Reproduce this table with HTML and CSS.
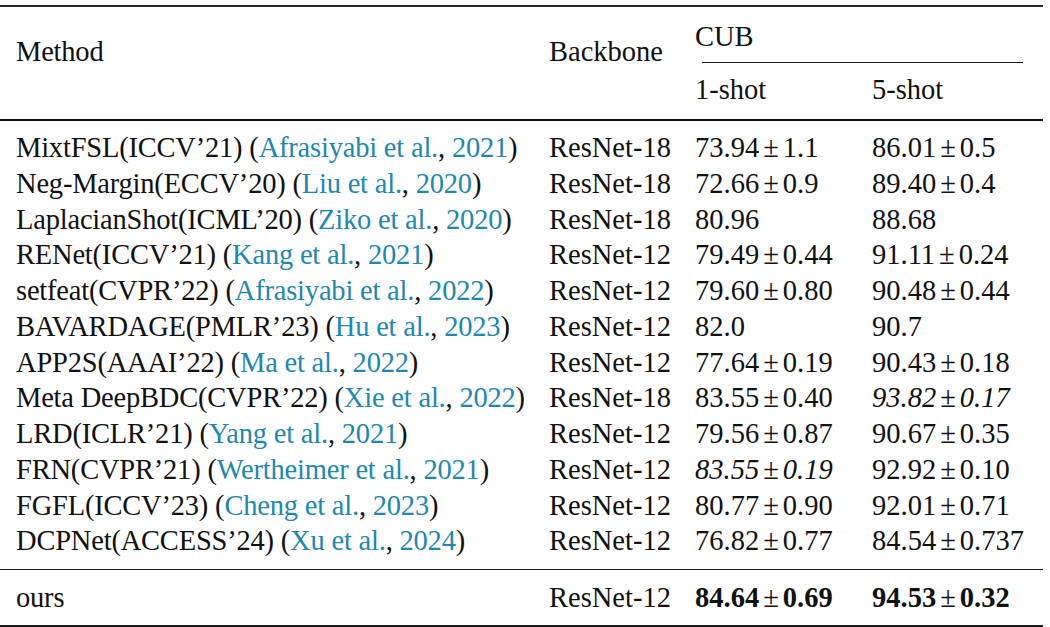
FILE: index.html
```html
<!DOCTYPE html>
<html lang="en">
<head>
<meta charset="utf-8">
<title>CUB results</title>
<link rel="stylesheet" href="styles.css">
</head>
<body>
<table class="results">
  <colgroup>
    <col class="c-method"><col class="c-backbone"><col class="c-one"><col class="c-five">
  </colgroup>
  <thead>
    <tr class="h1">
      <th rowspan="2" class="span2 first">Method</th>
      <th rowspan="2" class="span2">Backbone</th>
      <th colspan="2" class="cub"><div class="cub-label">CUB</div><div class="cmid"></div></th>
    </tr>
    <tr class="h2">
      <th>1-shot</th>
      <th>5-shot</th>
    </tr>
  </thead>
  <tbody class="main">
    <tr class="top"><td class="first">MixtFSL(ICCV’21) (<span class="ref">Afrasiyabi et al.</span>, <span class="ref">2021</span>)</td><td>ResNet-18</td><td>73.94<span class="pm">±</span>1.1</td><td>86.01<span class="pm">±</span>0.5</td></tr>
    <tr><td class="first">Neg-Margin(ECCV’20) (<span class="ref">Liu et al.</span>, <span class="ref">2020</span>)</td><td>ResNet-18</td><td>72.66<span class="pm">±</span>0.9</td><td>89.40<span class="pm">±</span>0.4</td></tr>
    <tr><td class="first">LaplacianShot(ICML’20) (<span class="ref">Ziko et al.</span>, <span class="ref">2020</span>)</td><td>ResNet-18</td><td>80.96</td><td>88.68</td></tr>
    <tr><td class="first">RENet(ICCV’21) (<span class="ref">Kang et al.</span>, <span class="ref">2021</span>)</td><td>ResNet-12</td><td>79.49<span class="pm">±</span>0.44</td><td>91.11<span class="pm">±</span>0.24</td></tr>
    <tr><td class="first">setfeat(CVPR’22) (<span class="ref">Afrasiyabi et al.</span>, <span class="ref">2022</span>)</td><td>ResNet-12</td><td>79.60<span class="pm">±</span>0.80</td><td>90.48<span class="pm">±</span>0.44</td></tr>
    <tr><td class="first">BAVARDAGE(PMLR’23) (<span class="ref">Hu et al.</span>, <span class="ref">2023</span>)</td><td>ResNet-12</td><td>82.0</td><td>90.7</td></tr>
    <tr><td class="first">APP2S(AAAI’22) (<span class="ref">Ma et al.</span>, <span class="ref">2022</span>)</td><td>ResNet-12</td><td>77.64<span class="pm">±</span>0.19</td><td>90.43<span class="pm">±</span>0.18</td></tr>
    <tr><td class="first">Meta DeepBDC(CVPR’22) (<span class="ref">Xie et al.</span>, <span class="ref">2022</span>)</td><td>ResNet-18</td><td>83.55<span class="pm">±</span>0.40</td><td class="it">93.82<span class="pm">±</span>0.17</td></tr>
    <tr><td class="first">LRD(ICLR’21) (<span class="ref">Yang et al.</span>, <span class="ref">2021</span>)</td><td>ResNet-12</td><td>79.56<span class="pm">±</span>0.87</td><td>90.67<span class="pm">±</span>0.35</td></tr>
    <tr><td class="first">FRN(CVPR’21) (<span class="ref">Wertheimer et al.</span>, <span class="ref">2021</span>)</td><td>ResNet-12</td><td class="it">83.55<span class="pm">±</span>0.19</td><td>92.92<span class="pm">±</span>0.10</td></tr>
    <tr><td class="first">FGFL(ICCV’23) (<span class="ref">Cheng et al.</span>, <span class="ref">2023</span>)</td><td>ResNet-12</td><td>80.77<span class="pm">±</span>0.90</td><td>92.01<span class="pm">±</span>0.71</td></tr>
    <tr class="bottom"><td class="first">DCPNet(ACCESS’24) (<span class="ref">Xu et al.</span>, <span class="ref">2024</span>)</td><td>ResNet-12</td><td>76.82<span class="pm">±</span>0.77</td><td>84.54<span class="pm">±</span>0.737</td></tr>
  </tbody>
  <tbody class="ours">
    <tr><td class="first">ours</td><td>ResNet-12</td><td class="b">84.64<span class="pm">±</span>0.69</td><td class="b">94.53<span class="pm">±</span>0.32</td></tr>
  </tbody>
</table>
</body>
</html>
```

FILE: styles.css
```css
html, body {
  margin: 0;
  padding: 0;
  background: #ffffff;
}

body {
  padding-top: 5px;
  font-family: "Liberation Serif", "Times New Roman", serif;
  font-size: 28.5px;
  color: #111111;
}

.results {
  width: 1043px;
  border-collapse: collapse;
  table-layout: fixed;
  border-top: 2px solid #2a2a2a;
  border-bottom: 2px solid #1a1a1a;
}

.c-method { width: 549px; }
.c-backbone { width: 146px; }
.c-one { width: 177px; }
.c-five { width: 171px; }

th, td {
  padding: 0;
  text-align: left;
  font-weight: normal;
  white-space: nowrap;
  line-height: 30px;
}

.first {
  padding-left: 16px;
  letter-spacing: -0.2px;
}

thead { border-bottom: 2px solid #111111; }

.span2 {
  vertical-align: top;
  padding-top: 30px;
}

.h1 .cub {
  vertical-align: top;
  padding-top: 15px;
  height: 40px;
}

.cub-label { line-height: 30px; }

.cmid {
  margin: 10px 20px 0 7px;
  border-top: 1.5px solid #1a1a1a;
}

.h2 th {
  height: 54px;
  vertical-align: middle;
  padding-bottom: 2px;
}

.main td {
  line-height: 35.75px;
}

.main tr.top td { padding-top: 9px; }
.main tr.bottom td { padding-bottom: 10px; }

.ours { border-top: 1.5px solid #1a1a1a; }

.ours td {
  height: 55px;
  vertical-align: middle;
  line-height: 30px;
}

.ref { color: #1e88b0; }

.pm {
  margin: 0 4px;
  font-weight: normal;
  font-style: normal;
}

.it { font-style: italic; }
.b { font-weight: bold; }
```
